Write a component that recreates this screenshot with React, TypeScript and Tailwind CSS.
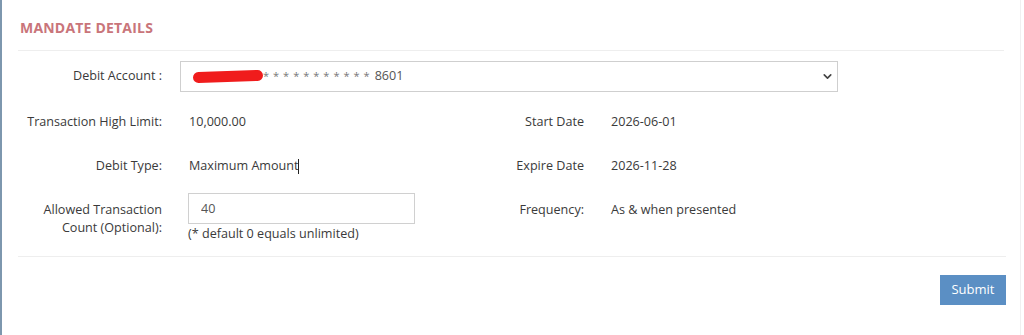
import { ChevronDown } from 'lucide-react';

const rows = [
  { label: 'Transaction High Limit:', value: '10,000.00', rLabel: 'Start Date', rValue: '2026-06-01', h: 'h-[44px]' },
  { label: 'Debit Type:', value: 'Maximum Amount', rLabel: 'Expire Date', rValue: '2026-11-28', cursor: true, h: 'h-[38px]' },
];

export default function App() {
  return (
    <div
      className="h-[335px] w-[1024px] bg-white border-l-2 border-[#7d97ae] text-[12.6px] text-[#3a3a3a]"
      style={{ fontFamily: '"Open Sans", "Liberation Sans", sans-serif' }}
    >
      <div className="pl-[16px] pr-[16px] h-full border-r border-[#f0f0f0] w-[1019px]">
        <div className="h-[51px] flex items-center pl-[2px] pt-[4px] border-b border-[#eeeeee]">
          <h2 className="text-[14px] font-bold text-[#c9757a] tracking-[0.2px]">MANDATE DETAILS</h2>
        </div>

        <div className="flex items-center mt-[10px] h-[31px]">
          <div className="w-[146px] text-right pr-[2px]">Debit Account :</div>
          <div className="ml-[16px] w-[658px] h-[31px] border border-[#cfcfcf] flex items-center pl-[12px] pr-[3px] justify-between">
            <div className="flex items-center">
              <span className="inline-block w-[70px] h-[11px] bg-[#f01c1c] rounded-full -rotate-[2deg]" />
              <span className="text-[#777] tracking-[4px] text-[11px]">***********</span>
              <span className="text-[#555] ml-[1px]">8601</span>
            </div>
            <ChevronDown size={13} strokeWidth={3} className="text-[#444]" />
          </div>
        </div>

        <div className="flex flex-col mt-[19px]">
          {rows.map((r) => (
            <div key={r.label} className={`flex ${r.h} items-start pt-[2px]`}>
              <div className="flex w-[494px]">
                <div className="w-[146px] text-right pr-[2px]">{r.label}</div>
                <div className="ml-[25px] flex items-center">
                  {r.value}
                  {r.cursor && <span className="inline-block w-[1px] h-[15px] bg-[#222] -ml-[1px]" />}
                </div>
              </div>
              <div className="flex">
                <div className="w-[72px] text-right">{r.rLabel}</div>
                <div className="ml-[27px]">{r.rValue}</div>
              </div>
            </div>
          ))}

          <div className="flex h-[63px] items-start">
            <div className="flex w-[494px]">
              <div className="w-[146px] text-right pr-[2px] leading-[18px] pt-[8px]">
                Allowed Transaction
                <br />
                Count (Optional):
              </div>
              <div className="ml-[24px] flex flex-col">
                <input
                  defaultValue="40"
                  className="w-[227px] h-[31px] border border-[#d0d0d0] px-[12px] text-[#555] outline-none"
                />
                <div className="mt-[1px] leading-[18px]">(* default 0 equals unlimited)</div>
              </div>
            </div>
            <div className="flex pt-[8px]">
              <div className="w-[72px] text-right">Frequency:</div>
              <div className="ml-[27px]">As &amp; when presented</div>
            </div>
          </div>
        </div>

        <div className="border-t border-[#eeeeee] flex justify-end pt-[18px] w-[988px]">
          <button className="w-[66px] h-[30px] bg-[#5b8fc4] text-white text-[13px]">Submit</button>
        </div>
      </div>
    </div>
  );
}
